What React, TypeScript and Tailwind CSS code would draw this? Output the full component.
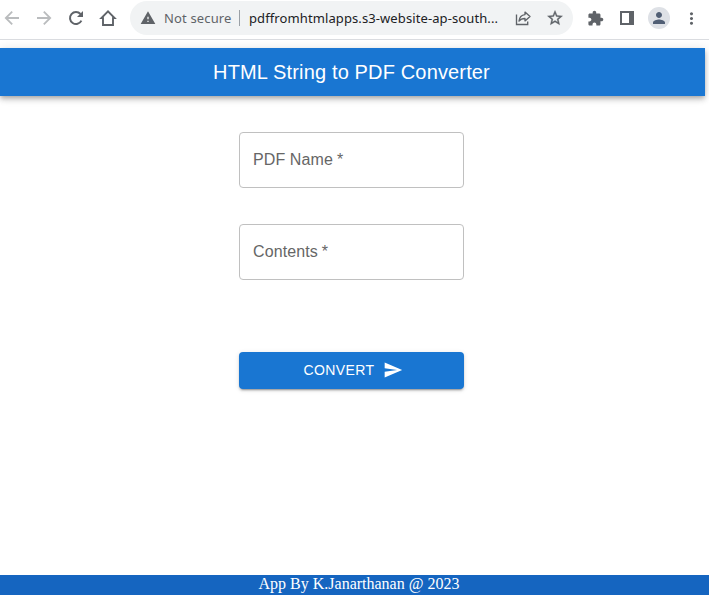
import type { ReactNode } from "react";

function Icon({ d, className = "size-5" }: { d: string; className?: string }) {
  return (
    <svg viewBox="0 0 24 24" fill="currentColor" className={`shrink-0 ${className}`}>
      <path d={d} />
    </svg>
  );
}

function ToolButton({ children, className = "text-[#5f6368]" }: { children: ReactNode; className?: string }) {
  return <button className={`flex h-8 w-8 shrink-0 items-center justify-center ${className}`}>{children}</button>;
}

function BrowserBar() {
  return (
    <div className="flex h-10 shrink-0 border-b border-[#dadce0] bg-white pt-px">
      <div className="-ml-1 flex h-[34px] items-center">
        <ToolButton className="text-[#babcbe]">
          <svg viewBox="0 0 20 20" className="size-5" fill="none" stroke="currentColor" strokeWidth="1.8">
            <path d="M17 10H4M10.2 3.6L3.8 10l6.4 6.4" />
          </svg>
        </ToolButton>
        <ToolButton className="text-[#babcbe]">
          <svg viewBox="0 0 20 20" className="size-5" fill="none" stroke="currentColor" strokeWidth="1.8">
            <path d="M3 10h13M9.8 3.6l6.4 6.4-6.4 6.4" />
          </svg>
        </ToolButton>
        <ToolButton>
          <svg viewBox="0 0 20 20" className="size-5" fill="none" stroke="currentColor" strokeWidth="2">
            <path d="M15.4 12.6A6 6 0 1 1 14.5 6" />
            <path d="M17 3v6h-6z" fill="currentColor" stroke="none" />
          </svg>
        </ToolButton>
        <ToolButton>
          <svg viewBox="0 0 20 20" className="size-5" fill="none" stroke="currentColor" strokeWidth="1.9">
            <path d="M3.4 10.1H5V17h10v-6.9h1.6L10 3.4z" />
          </svg>
        </ToolButton>
      </div>
      <div className="ml-[6px] flex h-[34px] w-[443px] items-center rounded-full bg-[#f1f3f4] font-['Noto_Sans','Open_Sans',sans-serif] text-[13px] leading-5">
        <Icon className="ml-[10px] size-4 text-[#5f6368]" d="M1 21h22L12 2 1 21zm12-3h-2v-2h2v2zm0-4h-2v-4h2v4z" />
        <span className="ml-2 w-[75px] whitespace-nowrap tracking-[0.15px] text-[#5f6368]">Not secure</span>
        <span className="h-4 w-px bg-[#9aa0a6]" />
        <span className="ml-[9px] w-[258px] whitespace-nowrap tracking-[0.1px] text-[#202124]">
          pdffromhtmlapps.s3-website-ap-south...
        </span>
        <ToolButton>
          <svg viewBox="0 0 20 20" className="size-5" fill="none" stroke="currentColor" strokeWidth="1.35">
            <path d="M3.500 6.500v10h11.200v-3" />
            <path d="M12 4.100l5 4.400-5 4.400v-2.400c-2.900 0-4.600.8-6 2.600.4-3.500 2.400-6.100 6-6.500z" strokeLinejoin="round" />
          </svg>
        </ToolButton>
        <ToolButton>
          <Icon
            className="size-[18px] stroke-current stroke-[0.5]"
            d="M22 9.24l-7.19-.62L12 2 9.19 8.63 2 9.24l5.46 4.73L5.82 21 12 17.27 18.18 21l-1.63-7.03L22 9.24zM12 15.4l-3.76 2.27 1-4.28-3.32-2.88 4.38-.38L12 6.1l1.71 4.04 4.38.38-3.32 2.88 1 4.28L12 15.4z"
          />
        </ToolButton>
      </div>
      <div className="ml-[6px] flex h-[34px] items-center">
        <ToolButton>
          <Icon
            className="size-[17px]"
            d="M20.5 11H19V7c0-1.1-.9-2-2-2h-4V3.5C13 2.12 11.88 1 10.5 1S8 2.12 8 3.5V5H4c-1.1 0-1.99.9-1.99 2v3.8H3.5c1.49 0 2.7 1.21 2.7 2.7s-1.21 2.7-2.7 2.7H2V20c0 1.1.9 2 2 2h3.8v-1.5c0-1.49 1.21-2.7 2.7-2.7 1.49 0 2.7 1.21 2.7 2.7V22H17c1.1 0 2-.9 2-2v-4h1.5c1.38 0 2.5-1.12 2.5-2.5S21.88 11 20.5 11z"
          />
        </ToolButton>
        <ToolButton>
          <span className="h-[14px] w-[14px] border-2 border-r-[5px] border-[#5f6368]" />
        </ToolButton>
        <ToolButton>
          <span className="flex size-[22px] items-center justify-center rounded-full bg-[#dee1e6] text-[#515f75]">
            <Icon
              className="size-[18px]"
              d="M12 12c2.21 0 4-1.79 4-4s-1.79-4-4-4-4 1.79-4 4 1.79 4 4 4zm0 2c-2.67 0-8 1.34-8 4v2h16v-2c0-2.66-5.33-4-8-4z"
            />
          </span>
        </ToolButton>
        <ToolButton>
          <Icon
            className="size-[19px]"
            d="M12 8c1.1 0 2-.9 2-2s-.9-2-2-2-2 .9-2 2 .9 2 2 2zm0 2c-1.1 0-2 .9-2 2s.9 2 2 2 2-.9 2-2-.9-2-2-2zm0 6c-1.1 0-2 .9-2 2s.9 2 2 2 2-.9 2-2-.9-2-2-2z"
          />
        </ToolButton>
      </div>
    </div>
  );
}

function Field({ label }: { label: string }) {
  return (
    <label className="flex h-14 w-[225px] items-center rounded-[4px] border border-[#c0c0c0] px-[13px] pb-px text-base tracking-[0.1px] text-[#666666]">
      {label}
      <span className="ml-1">*</span>
    </label>
  );
}

export default function App() {
  return (
    <div className="flex h-[595px] w-[709px] flex-col overflow-hidden bg-white font-['Liberation_Sans',Arial,sans-serif]">
      <BrowserBar />
      <div className="flex min-h-0 flex-1 flex-col overflow-hidden pt-2">
        <header className="flex h-12 w-[705px] shrink-0 items-center justify-center bg-[#1976d2] pr-[2px] text-xl tracking-[0.15px] text-white shadow-[0px_2px_4px_-1px_rgba(0,0,0,0.2),0px_4px_5px_0px_rgba(0,0,0,0.14),0px_1px_10px_0px_rgba(0,0,0,0.12)]">
          <h1>HTML String to PDF Converter</h1>
        </header>
        <form className="ml-[239px] mt-9 flex w-[225px] flex-1 flex-col">
          <Field label="PDF Name" />
          <div className="mt-9">
            <Field label="Contents" />
          </div>
          <button
            type="button"
            className="mt-[72px] flex h-[37px] w-[225px] items-center justify-center rounded-[4px] bg-[#1976d2] pb-px pl-[3px] text-sm tracking-[0.4px] text-white shadow-[0px_3px_1px_-2px_rgba(0,0,0,0.2),0px_2px_2px_0px_rgba(0,0,0,0.14),0px_1px_5px_0px_rgba(0,0,0,0.12)]"
          >
            CONVERT
            <Icon className="ml-2 size-5" d="M2.01 21L23 12 2.01 3 2 10l15 2-15 2z" />
          </button>
        </form>
        <footer className="flex h-5 shrink-0 items-center justify-center bg-[#1565c0] pb-[2px] pl-[9px] font-['Liberation_Serif','Times_New_Roman',serif] text-base text-white">
          <span className="leading-[18px]">App By K.Janarthanan @ 2023</span>
        </footer>
      </div>
    </div>
  );
}
